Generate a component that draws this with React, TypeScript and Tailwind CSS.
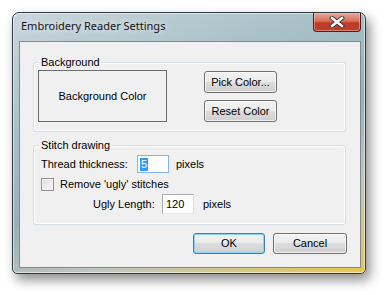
const ui = { fontFamily: "'Liberation Sans', Arial, sans-serif" };

function Btn({ label, primary = false, w = "w-[73px]", h = "h-[22px]" }: { label: string; primary?: boolean; w?: string; h?: string }) {
  return (
    <button
      className={
        primary
          ? `${w} ${h} rounded-[3px] border border-[#3c7fb1] text-[11px] text-black bg-[linear-gradient(to_bottom,#f2f2f2_0%,#ebebeb_50%,#dddddd_50%,#cfcfcf_100%)] shadow-[inset_0_0_0_1px_#8fd0f5]`
          : `${w} ${h} rounded-[3px] border border-[#707070] text-[11px] text-black bg-[linear-gradient(to_bottom,#f2f2f2_0%,#ebebeb_50%,#dddddd_50%,#cfcfcf_100%)] shadow-[inset_0_0_0_1px_rgba(255,255,255,0.7)]`
      }
      style={ui}
    >
      {label}
    </button>
  );
}

function Group({ title, h, children }: { title: string; h: string; children: React.ReactNode }) {
  return (
    <div className={`relative ml-[13px] w-[313px] ${h} rounded-[3px] border border-[#d5dfe5] shadow-[inset_0_0_0_1px_#ffffff]`}>
      <span className="absolute left-[5px] -top-[8px] px-[2px] bg-[#f0f0f0] text-[11px] leading-[14px] text-black">
        {title}
      </span>
      {children}
    </div>
  );
}

export default function App() {
  return (
    <div className="w-[387px] h-[295px] bg-white pt-[12px] pl-[12px] overflow-hidden" style={ui}>
      {/* window frame */}
      <div className="w-[354px] h-[262px] rounded-t-[7px] rounded-b-[5px] border border-[#2e3a40] bg-[linear-gradient(160deg,#c9d7dd_0%,#a9c0c8_30%,#98b1b8_55%,#c0c6bf_75%,#e8c64c_100%)] shadow-[inset_0_0_0_1px_rgba(255,255,255,0.55),4px_6px_12px_rgba(0,0,0,0.45)]">
        {/* title bar */}
        <div className="h-[28px] flex items-start">
          <span
            className="ml-[8px] text-[11px] leading-[26px] text-[#111] [text-shadow:0_0_6px_rgba(255,255,255,0.95)]"
            style={{ fontFamily: "'Noto Sans', 'Open Sans', sans-serif" }}
          >
            Embroidery Reader Settings
          </span>
          <div className="ml-auto mr-[4px] w-[48px] h-[19px] rounded-b-[4px] border border-t-0 border-[#4a2018] bg-[linear-gradient(to_bottom,#e9a597_0%,#d6705e_45%,#c23a25_55%,#b5412e_100%)] shadow-[inset_0_0_0_1px_rgba(255,200,190,0.5)] flex items-center justify-center">
            <svg width="16" height="12" viewBox="0 0 16 12">
              <path d="M3 2 L13 10 M13 2 L3 10" stroke="#3a3a3a" strokeWidth="4.2" strokeLinecap="square" />
              <path d="M3 2 L13 10 M13 2 L3 10" stroke="#ffffff" strokeWidth="2.4" strokeLinecap="square" />
            </svg>
          </div>
        </div>

        {/* client area */}
        <div className="ml-[6px] w-[342px] h-[227px] border border-[#7d8b91] bg-[#f0f0f0] text-[11px] text-black">
          <div className="h-[20px]" />
          <Group title="Background" h="h-[70px]">
            <div className="flex pt-[7px] pl-[4px]">
              <div className="w-[129px] h-[52px] border border-[#6c6c6c] flex items-center justify-center text-[11px]">
                Background Color
              </div>
              <div className="ml-[37px] mt-[1px] flex flex-col gap-[7px]">
                <Btn label="Pick Color..." />
                <Btn label="Reset Color" />
              </div>
            </div>
          </Group>

          <div className="h-[13px]" />
          <Group title="Stitch drawing" h="h-[80px]">
            <div className="pt-[9px] pl-[7px]">
              <div className="flex items-center h-[18px]">
                <span className="w-[96px] text-[11px]">Thread thickness:</span>
                <div className="w-[32px] h-[18px] bg-white border border-[#7eb4ea] flex items-center pl-[2px]">
                  <span className="bg-[#3399ff] text-white text-[11px] leading-[13px] px-[1px]">5</span>
                </div>
                <span className="ml-[7px] text-[11px]">pixels</span>
              </div>
              <div className="flex items-center h-[13px] mt-[5px]">
                <div className="w-[13px] h-[13px] border border-[#8f8f8f] bg-[linear-gradient(135deg,#dcdcdc,#f8f8f8)] shadow-[inset_0_0_0_1px_#f4f4f4]" />
                <span className="ml-[6px] text-[11px]">Remove 'ugly' stitches</span>
              </div>
              <div className="flex items-center h-[20px] mt-[3px] pl-[52px]">
                <span className="w-[69px] text-[11px]">Ugly Length:</span>
                <div className="w-[32px] h-[20px] bg-white border border-[#abadb3] border-b-[#e3e9ef] border-r-[#dbdfe6] flex items-center pl-[3px] text-[11px]">
                  120
                </div>
                <span className="ml-[9px] text-[11px]">pixels</span>
              </div>
            </div>
          </Group>

          <div className="flex justify-end gap-[8px] mr-[13px] mt-[8px]">
            <Btn label="OK" primary h="h-[21px]" w="w-[72px]" />
            <Btn label="Cancel" h="h-[21px]" w="w-[74px]" />
          </div>
        </div>
      </div>
    </div>
  );
}
